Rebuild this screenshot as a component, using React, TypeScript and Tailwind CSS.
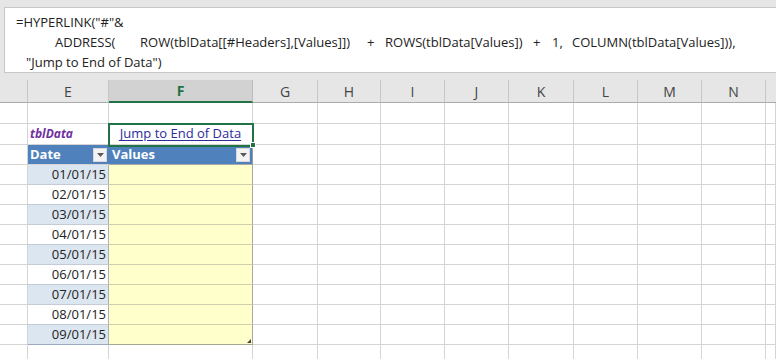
const cols = ["D", "E", "F", "G", "H", "I", "J", "K", "L", "M", "N", "O"];
const gridCols =
  "grid grid-cols-[28px_81px_144px_65px_63px_64px_64px_65px_64px_64px_64px_1fr]";

function Caret() {
  return (
    <svg width="7" height="4" viewBox="0 0 7 4">
      <path d="M0 0H7L3.5 4Z" fill="#5a5a5a" />
    </svg>
  );
}

function DropButton() {
  return (
    <div className="flex items-center justify-center w-[14px] h-[14px] bg-[#f3f3f3] border border-[#d8d8d8]">
      <Caret />
    </div>
  );
}

function Blank({ h }: { h: string }) {
  return <div className={`${h} bg-white border-r border-b border-[#d4d4d4]`} />;
}

function FormulaBar() {
  return (
    <div className="h-[80px] pt-[7px] pl-[4px] bg-[#e6e6e6]">
      <div className="h-[66px] bg-white border-t border-l border-b border-[#c6c6c6] pl-[11px] pt-[4px] text-[13px] leading-[20px] text-[#222] whitespace-pre">
        <div>=HYPERLINK("#"&amp;</div>
        <div className="flex">
          <span className="w-[39px] shrink-0" />
          <span className="w-[85px] shrink-0">ADDRESS(</span>
          <span className="w-[227px] shrink-0">ROW(tblData[[#Headers],[Values]])</span>
          <span className="w-[18px] shrink-0">+</span>
          <span className="w-[148px] shrink-0">ROWS(tblData[Values])</span>
          <span className="w-[19px] shrink-0">+</span>
          <span className="w-[20px] shrink-0">1,</span>
          <span className="shrink-0">COLUMN(tblData[Values])),</span>
        </div>
        <div className="pl-[10px]">"Jump to End of Data")</div>
      </div>
    </div>
  );
}

function HeaderRow() {
  return (
    <div className={`${gridCols} h-[23px] bg-[#e6e6e6]`}>
      {cols.map((c, i) =>
        c === "F" ? (
          <div
            key={c}
            className="flex items-center justify-center bg-[#d2d2d2] border-r border-[#bdbdbd] border-b-2 border-b-[#217346] text-[14px] font-bold text-[#217346]"
          >
            F
          </div>
        ) : (
          <div
            key={c}
            className={`flex items-center justify-center border-b border-[#ababab] text-[14px] text-[#444] ${
              i < cols.length - 1 ? "border-r border-r-[#c6c6c6]" : ""
            }`}
          >
            {c === "D" || c === "O" ? "" : c}
          </div>
        )
      )}
    </div>
  );
}

function EmptyTail({ h }: { h: string }) {
  return (
    <>
      {cols.slice(3).map((c) => (
        <Blank key={c} h={h} />
      ))}
    </>
  );
}

const dates = [
  "01/01/15",
  "02/01/15",
  "03/01/15",
  "04/01/15",
  "05/01/15",
  "06/01/15",
  "07/01/15",
  "08/01/15",
  "09/01/15",
];

export default function App() {
  return (
    <div
      className="w-[776px] h-[359px] overflow-hidden bg-white text-[#222]"
      style={{ fontFamily: '"Open Sans", "Liberation Sans", sans-serif' }}
    >
      <FormulaBar />
      <HeaderRow />

      {/* row 1 */}
      <div className={gridCols}>
        <Blank h="h-[21px]" />
        <Blank h="h-[21px]" />
        <Blank h="h-[21px]" />
        <EmptyTail h="h-[21px]" />
      </div>

      {/* row 2: table name + hyperlink */}
      <div className={gridCols}>
        <Blank h="h-[21px]" />
        <div className="h-[21px] flex items-center pl-[2px] border-r border-b border-[#d4d4d4] text-[12px] font-bold italic text-[#7030a0]">
          tblData
        </div>
        <div className="relative h-[21px] flex items-center justify-center border-r border-b border-[#d4d4d4] text-[13px] text-[#2b2b9c] underline underline-offset-2">
          Jump to End of Data
          <div className="absolute -left-[1px] -top-[1px] w-[146px] h-[24px] border-2 border-[#217346]" />
          <div className="absolute left-[141px] top-[18px] w-[6px] h-[6px] bg-[#217346] border border-white" />
        </div>
        <EmptyTail h="h-[21px]" />
      </div>

      {/* row 3: table header */}
      <div className={gridCols}>
        <Blank h="h-[20px]" />
        <div className="h-[20px] flex items-center justify-between pl-[2px] pr-[2px] bg-[#4f81bd] border-b border-[#d4d4d4] text-[13px] font-bold text-white">
          Date
          <DropButton />
        </div>
        <div className="h-[20px] flex items-center justify-between pl-[3px] pr-[2px] bg-[#4f81bd] border-r border-b border-[#a8a8a8] border-r-[#9a9a9a] text-[13px] font-bold text-white">
          Values
          <DropButton />
        </div>
        <EmptyTail h="h-[20px]" />
      </div>

      {dates.map((d, i) => (
        <div key={d} className={gridCols}>
          <Blank h="h-[20px]" />
          <div
            className={`h-[20px] flex items-center justify-end pr-[2px] border-r border-b border-r-[#b0b0b0] text-[13px] ${
              i % 2 === 0 ? "bg-[#dce6f1]" : "bg-white"
            } ${i === dates.length - 1 ? "border-b-[#9aa9bf]" : "border-b-[#c3cbd6]"}`}
          >
            {d}
          </div>
          <div
            className={`relative h-[20px] bg-[#ffffcc] border-r border-b border-r-[#a8a8a0] ${
              i === dates.length - 1 ? "border-b-[#a8a890]" : "border-b-[#cdcdb0]"
            }`}
          >
            {i === dates.length - 1 && (
              <svg className="absolute right-[1px] bottom-[1px]" width="4" height="4" viewBox="0 0 4 4">
                <path d="M4 0V4H0Z" fill="#444" />
              </svg>
            )}
          </div>
          <EmptyTail h="h-[20px]" />
        </div>
      ))}

      {/* trailing row */}
      <div className={gridCols}>
        {cols.map((c) => (
          <Blank key={c} h="h-[20px]" />
        ))}
      </div>
    </div>
  );
}
